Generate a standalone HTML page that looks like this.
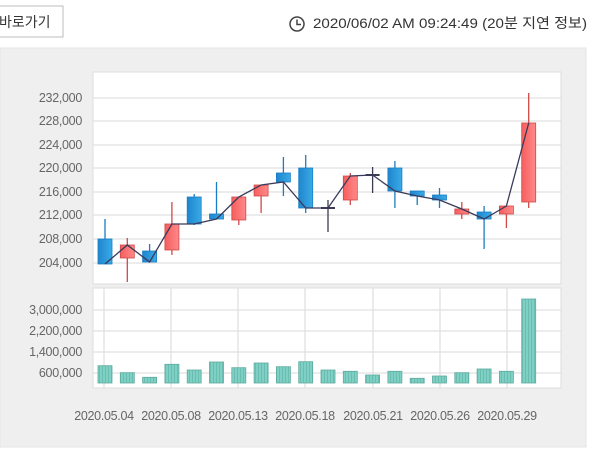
<!DOCTYPE html>
<html><head><meta charset="utf-8"><style>
body{margin:0;width:600px;height:449px;overflow:hidden;background:#fff;font-family:"Liberation Sans","Noto Sans CJK KR",sans-serif;}
</style></head><body>
<svg width="600" height="449" viewBox="0 0 600 449" xmlns="http://www.w3.org/2000/svg" font-family="Liberation Sans, Noto Sans CJK KR, sans-serif">
<defs>
<linearGradient id="bl" x1="0" x2="1"><stop offset="0" stop-color="#1e86cf"/><stop offset="1" stop-color="#3aaae6"/></linearGradient>
<linearGradient id="rd" x1="0" x2="1"><stop offset="0" stop-color="#f65e5e"/><stop offset="1" stop-color="#ff8a8a"/></linearGradient>
<pattern id="vp" width="3" height="10" patternUnits="userSpaceOnUse"><rect width="3" height="10" fill="#7fd0c4"/><rect width="1" height="10" fill="#6cbdb1"/></pattern>
</defs>
<rect x="-5" y="6" width="68" height="31" fill="#fff" stroke="#bcbcbc"/>
<text x="-1" y="27" font-size="14" fill="#333">바로가기</text>
<circle cx="297" cy="24" r="7" fill="none" stroke="#444" stroke-width="1.5"/>
<path d="M297 19.5V24.5H301" fill="none" stroke="#444" stroke-width="1.5"/>
<text x="313" y="28" font-size="14" fill="#333" textLength="274" lengthAdjust="spacingAndGlyphs">2020/06/02 AM 09:24:49 (20분 지연 정보)</text>
<rect x="0" y="48" width="586" height="399" fill="#efefef" stroke="#e4e4e4"/>
<rect x="93" y="72" width="468" height="212" fill="#fff" stroke="#dcdcdc"/>
<rect x="93" y="288" width="468" height="100" fill="#fff" stroke="#dcdcdc"/>
<g stroke="#e0e0e0" stroke-width="1.3">
<line x1="93" x2="561" y1="98" y2="98"/><line x1="93" x2="561" y1="121" y2="121"/><line x1="93" x2="561" y1="145" y2="145"/><line x1="93" x2="561" y1="168" y2="168"/><line x1="93" x2="561" y1="192" y2="192"/><line x1="93" x2="561" y1="215" y2="215"/><line x1="93" x2="561" y1="239" y2="239"/><line x1="93" x2="561" y1="263" y2="263"/>
<line x1="93" x2="561" y1="310" y2="310"/><line x1="93" x2="561" y1="331" y2="331"/><line x1="93" x2="561" y1="352" y2="352"/><line x1="93" x2="561" y1="373" y2="373"/>
<line x1="104" x2="104" y1="288" y2="388"/><line x1="171" x2="171" y1="288" y2="388"/><line x1="238" x2="238" y1="288" y2="388"/><line x1="305" x2="305" y1="288" y2="388"/><line x1="373" x2="373" y1="288" y2="388"/><line x1="440" x2="440" y1="288" y2="388"/><line x1="507" x2="507" y1="288" y2="388"/>
</g>
<g font-size="12.5" fill="#666" text-anchor="end" letter-spacing="-0.3">
<text x="82" y="102">232,000</text><text x="82" y="125">228,000</text><text x="82" y="149">224,000</text><text x="82" y="172">220,000</text><text x="82" y="196">216,000</text><text x="82" y="219">212,000</text><text x="82" y="243">208,000</text><text x="82" y="267">204,000</text>
<text x="82" y="314">3,000,000</text><text x="82" y="335">2,200,000</text><text x="82" y="356">1,400,000</text><text x="82" y="377">600,000</text>
</g>
<g font-size="12.5" fill="#666" text-anchor="middle" letter-spacing="-0.3">
<text x="104" y="420">2020.05.04</text><text x="171" y="420">2020.05.08</text><text x="238" y="420">2020.05.13</text><text x="305" y="420">2020.05.18</text><text x="373" y="420">2020.05.21</text><text x="440" y="420">2020.05.26</text><text x="507" y="420">2020.05.29</text>
</g>
<g stroke-width="1.3">
<line x1="105" x2="105" y1="219" y2="264" stroke="#1a7dc4"/>
<line x1="127.3" x2="127.3" y1="238" y2="282" stroke="#d04848"/>
<line x1="149.6" x2="149.6" y1="244" y2="262" stroke="#1a7dc4"/>
<line x1="171.9" x2="171.9" y1="202" y2="255" stroke="#d04848"/>
<line x1="194.2" x2="194.2" y1="194" y2="225" stroke="#1a7dc4"/>
<line x1="216.5" x2="216.5" y1="182" y2="219" stroke="#1a7dc4"/>
<line x1="238.8" x2="238.8" y1="197" y2="225" stroke="#d04848"/>
<line x1="261.1" x2="261.1" y1="185" y2="213" stroke="#d04848"/>
<line x1="283.4" x2="283.4" y1="157" y2="196" stroke="#1a7dc4"/>
<line x1="305.7" x2="305.7" y1="155" y2="213" stroke="#1a7dc4"/>
<line x1="328" x2="328" y1="200" y2="232" stroke="#3c3c50"/>
<line x1="350.3" x2="350.3" y1="173" y2="205" stroke="#d04848"/>
<line x1="372.6" x2="372.6" y1="167" y2="193" stroke="#3c3c50"/>
<line x1="394.9" x2="394.9" y1="161" y2="208" stroke="#1a7dc4"/>
<line x1="417.2" x2="417.2" y1="191" y2="205" stroke="#1a7dc4"/>
<line x1="439.5" x2="439.5" y1="188" y2="208" stroke="#1a7dc4"/>
<line x1="461.8" x2="461.8" y1="202" y2="219" stroke="#d04848"/>
<line x1="484.1" x2="484.1" y1="206" y2="249" stroke="#1a7dc4"/>
<line x1="506.4" x2="506.4" y1="206" y2="228" stroke="#d04848"/>
<line x1="528.7" x2="528.7" y1="93" y2="208" stroke="#d04848"/>
</g>
<g stroke-width="0.8">
<rect x="98" y="239" width="14" height="25" fill="url(#bl)" stroke="#1a7dc4"/>
<rect x="120.3" y="245" width="14" height="13" fill="url(#rd)" stroke="#d04848"/>
<rect x="142.6" y="251" width="14" height="11" fill="url(#bl)" stroke="#1a7dc4"/>
<rect x="164.9" y="224" width="14" height="26" fill="url(#rd)" stroke="#d04848"/>
<rect x="187.2" y="197" width="14" height="27" fill="url(#bl)" stroke="#1a7dc4"/>
<rect x="209.5" y="214" width="14" height="5" fill="url(#bl)" stroke="#1a7dc4"/>
<rect x="231.8" y="197" width="14" height="23" fill="url(#rd)" stroke="#d04848"/>
<rect x="254.1" y="185" width="14" height="11" fill="url(#rd)" stroke="#d04848"/>
<rect x="276.4" y="173" width="14" height="9" fill="url(#bl)" stroke="#1a7dc4"/>
<rect x="298.7" y="168" width="14" height="40" fill="url(#bl)" stroke="#1a7dc4"/>
<line x1="321" x2="335" y1="208" y2="208" stroke="#3c3c50" stroke-width="2"/>
<rect x="343.3" y="176" width="14" height="24" fill="url(#rd)" stroke="#d04848"/>
<line x1="365.6" x2="379.6" y1="175" y2="175" stroke="#3c3c50" stroke-width="2"/>
<rect x="387.9" y="168" width="14" height="23" fill="url(#bl)" stroke="#1a7dc4"/>
<rect x="410.2" y="191" width="14" height="5" fill="url(#bl)" stroke="#1a7dc4"/>
<rect x="432.5" y="195" width="14" height="5" fill="url(#bl)" stroke="#1a7dc4"/>
<rect x="454.8" y="209" width="14" height="5" fill="url(#rd)" stroke="#d04848"/>
<rect x="477.1" y="212" width="14" height="7" fill="url(#bl)" stroke="#1a7dc4"/>
<rect x="499.4" y="206" width="14" height="8" fill="url(#rd)" stroke="#d04848"/>
<rect x="521.7" y="123" width="14" height="79" fill="url(#rd)" stroke="#d04848"/>
</g>
<polyline points="105,264 127.3,245 149.6,262 171.9,224 194.2,224 216.5,219 238.8,197 261.1,185 283.4,182 305.7,208 328,208 350.3,176 372.6,175 394.9,191 417.2,196 439.5,200 461.8,209 484.1,219 506.4,206 528.7,123" fill="none" stroke="#3a3a5a" stroke-width="1.3"/>
<g fill="url(#vp)" stroke="#5eaa9f" stroke-width="0.8">
<rect x="98" y="365.7" width="14" height="17.3"/>
<rect x="120.3" y="372.7" width="14" height="10.3"/>
<rect x="142.6" y="377.3" width="14" height="5.7"/>
<rect x="164.9" y="364.3" width="14" height="18.7"/>
<rect x="187.2" y="370" width="14" height="13"/>
<rect x="209.5" y="362" width="14" height="21"/>
<rect x="231.8" y="367.7" width="14" height="15.3"/>
<rect x="254.1" y="363" width="14" height="20"/>
<rect x="276.4" y="366.7" width="14" height="16.3"/>
<rect x="298.7" y="361.7" width="14" height="21.3"/>
<rect x="321" y="370" width="14" height="13"/>
<rect x="343.3" y="371.3" width="14" height="11.7"/>
<rect x="365.6" y="375" width="14" height="8"/>
<rect x="387.9" y="371.3" width="14" height="11.7"/>
<rect x="410.2" y="378.3" width="14" height="4.7"/>
<rect x="432.5" y="376" width="14" height="7"/>
<rect x="454.8" y="372.7" width="14" height="10.3"/>
<rect x="477.1" y="369" width="14" height="14"/>
<rect x="499.4" y="371.3" width="14" height="11.7"/>
<rect x="521.7" y="299" width="14" height="84"/>
</g>
</svg>
</body></html>
